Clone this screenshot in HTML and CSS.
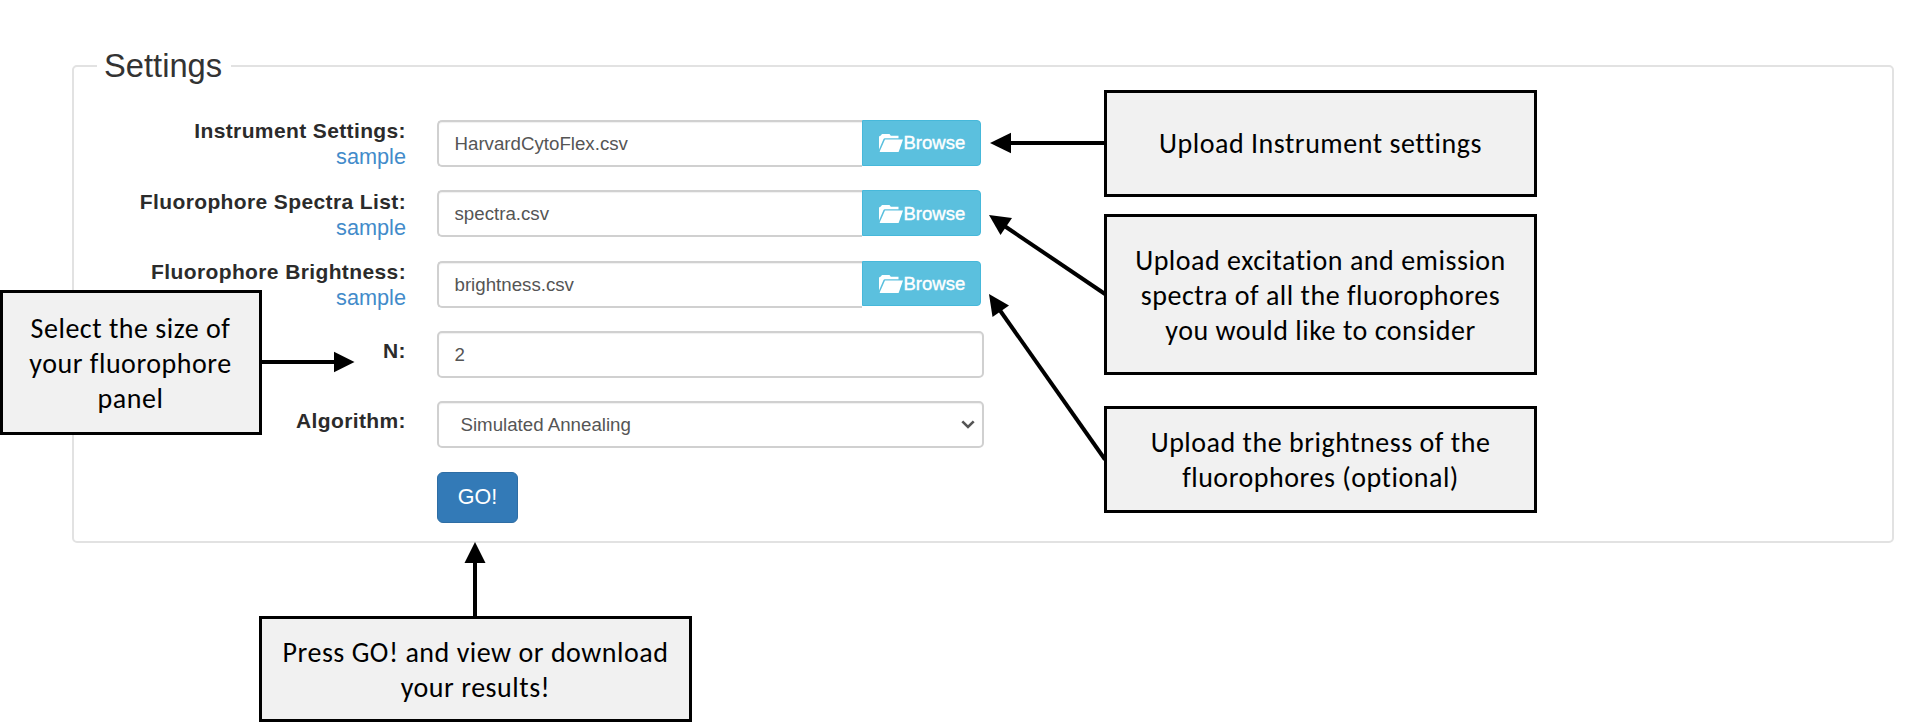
FILE: index.html
```
<!DOCTYPE html>
<html lang="en">
<head>
<meta charset="utf-8">
<title>Settings</title>
<link rel="stylesheet" href="styles.css">
</head>
<body>
<svg class="defs" width="0" height="0" aria-hidden="true">
  <symbol id="folder" viewBox="0 0 24 18">
    <path d="M0 15.500V2.600L1.800 1.600 3 0H10.500L11.800 1.800H19.500V4.200H5.800Q4.900 4.200 4.500 5Z"/>
    <path d="M6 5.600H24L19.800 17.400Q19.600 18 19 18H1Q.600 18 .800 17.300Z"/>
  </symbol>
</svg>
<fieldset class="settings">
  <legend class="legend">Settings</legend>
  <div class="rows">
    <div class="row">
      <div class="label"><b>Instrument Settings:</b><a class="sample">sample</a></div>
      <div class="group"><div class="input file">HarvardCytoFlex.csv</div><div class="browse"><svg class="folder"><use href="#folder"/></svg><span>Browse</span></div></div>
    </div>
    <div class="row">
      <div class="label"><b>Fluorophore Spectra List:</b><a class="sample">sample</a></div>
      <div class="group"><div class="input file">spectra.csv</div><div class="browse"><svg class="folder"><use href="#folder"/></svg><span>Browse</span></div></div>
    </div>
    <div class="row">
      <div class="label"><b>Fluorophore Brightness:</b><a class="sample">sample</a></div>
      <div class="group"><div class="input file">brightness.csv</div><div class="browse"><svg class="folder"><use href="#folder"/></svg><span>Browse</span></div></div>
    </div>
    <div class="row">
      <div class="label single"><b>N:</b></div>
      <div class="group"><div class="input">2</div></div>
    </div>
    <div class="row">
      <div class="label single"><b>Algorithm:</b></div>
      <div class="group"><div class="input select"><span>Simulated Annealing</span><svg class="chevron" viewBox="0 0 14 9"><path d="M1.300 1.300 7 7 12.700 1.300"/></svg></div></div>
    </div>
    <div class="row">
      <div></div>
      <div class="group"><div class="go">GO!</div></div>
    </div>
  </div>
</fieldset>

<svg class="arrows" width="1925" height="722" viewBox="0 0 1925 722">
  <g class="lines">
    <path d="M1105 143H1008"/>
    <path d="M1105 294 1003 225"/>
    <path d="M1105 459.500 999 309"/>
    <path d="M261 362H336"/>
    <path d="M475 617V561"/>
  </g>
  <g>
    <path d="M990 143 1011 132.700V153.300Z"/>
    <path d="M989 215 1012 218 1000.500 235Z"/>
    <path d="M989 294 1009 305.500 992.500 317Z"/>
    <path d="M354.500 362 334 351.700V372.300Z"/>
    <path d="M475 542 485.500 563H464.500Z"/>
  </g>
</svg>
<div class="callout instrument">Upload Instrument settings</div>
<div class="callout spectra">Upload excitation and emission<br>spectra of all the fluorophores<br>you would like to consider</div>
<div class="callout brightness">Upload the brightness of the<br>fluorophores (optional)</div>
<div class="callout size">Select the size of<br>your fluorophore<br>panel</div>
<div class="callout press">Press GO! and view or download<br>your results!</div>
</body>
</html>
```
FILE: styles.css
```
* { box-sizing: border-box; }
html, body { height: 722px; overflow: hidden; }
body {
  margin: 0;
  padding-top: 43px;
  position: relative;
  background: #fff;
  color: #2b2b2b;
  font-family: "Liberation Sans", Arial, sans-serif;
}
.defs { position: absolute; }
.settings {
  margin: 0 31px 0 72px;
  height: 500px;
  padding: 31px 0 0 21px;
  border: 2px solid #e2e2e2;
  border-radius: 5px;
}
.legend {
  height: 46px;
  margin-left: 2px;
  padding: 0 9px 0 7px;
  font-size: 32.700px;
  line-height: 46px;
  color: #333;
}
.rows { display: grid; grid-auto-rows: 46.500px; row-gap: 23.800px; }
.row { display: grid; grid-template-columns: 311px 547px; column-gap: 31px; }
.label {
  display: flex;
  flex-direction: column;
  text-align: right;
  font-size: 21px;
  line-height: 26px;
  margin-top: -1.700px;
}
.single { margin-top: 7.300px; }
.label b { letter-spacing: .380px; }
.sample { color: #428bca; font-size: 21.700px; }
.group { display: flex; align-items: flex-start; }
.input {
  flex: 1;
  height: 47px;
  padding: 0 15.500px;
  border: 2px solid #d0d0d0;
  border-radius: 5px;
  box-shadow: inset 0 1px 1px #00000010;
  font-size: 18.700px;
  line-height: 44px;
  color: #555;
}
.file { border-right: 0; border-radius: 5px 0 0 5px; }
.browse {
  width: 119px;
  height: 45.500px;
  margin-right: 3px;
  padding: 1px 0 0 16px;
  display: flex;
  align-items: center;
  gap: .500px;
  border: 1px solid #46b8da;
  border-radius: 0 4px 4px 0;
  background: #5bc0de;
  color: #fff;
  font-size: 18.500px;
  -webkit-text-stroke: .400px #fff;
}
.folder { width: 24px; height: 18px; fill: #fff; }
.select { display: flex; align-items: center; justify-content: space-between; padding: 0 7px 0 21.500px; }
.chevron { width: 14px; height: 9px; fill: none; stroke: #555; stroke-width: 2.600; }
.go {
  width: 81px;
  height: 51px;
  margin-top: .500px;
  border: 1px solid #2e6da4;
  border-radius: 6px;
  background: #337ab7;
  color: #fff;
  font-size: 21.500px;
  line-height: 49px;
  text-align: center;
}
.arrows { position: absolute; left: 0; top: 0; fill: #000; }
.lines { stroke: #000; stroke-width: 4; fill: none; }
.callout {
  position: absolute;
  display: flow-root;
  width: 433px;
  border: 3px solid #000;
  background: #f1f1f1;
  color: #000;
  font-family: Carlito, Lato, sans-serif;
  font-size: 28px;
  letter-spacing: .520px;
  line-height: 35px;
  text-align: center;
  white-space: nowrap;
}
.instrument { left: 1104px; top: 90px; height: 107px; padding-top: 33px; }
.spectra { left: 1104px; top: 214px; height: 161px; padding-top: 26px; }
.brightness { left: 1104px; top: 406px; height: 107px; padding-top: 16px; }
.size { left: 0; top: 290px; width: 262px; height: 145px; padding-top: 18px; padding-right: 1px; }
.press { left: 259px; top: 616px; height: 106px; padding-top: 16px; }
```
